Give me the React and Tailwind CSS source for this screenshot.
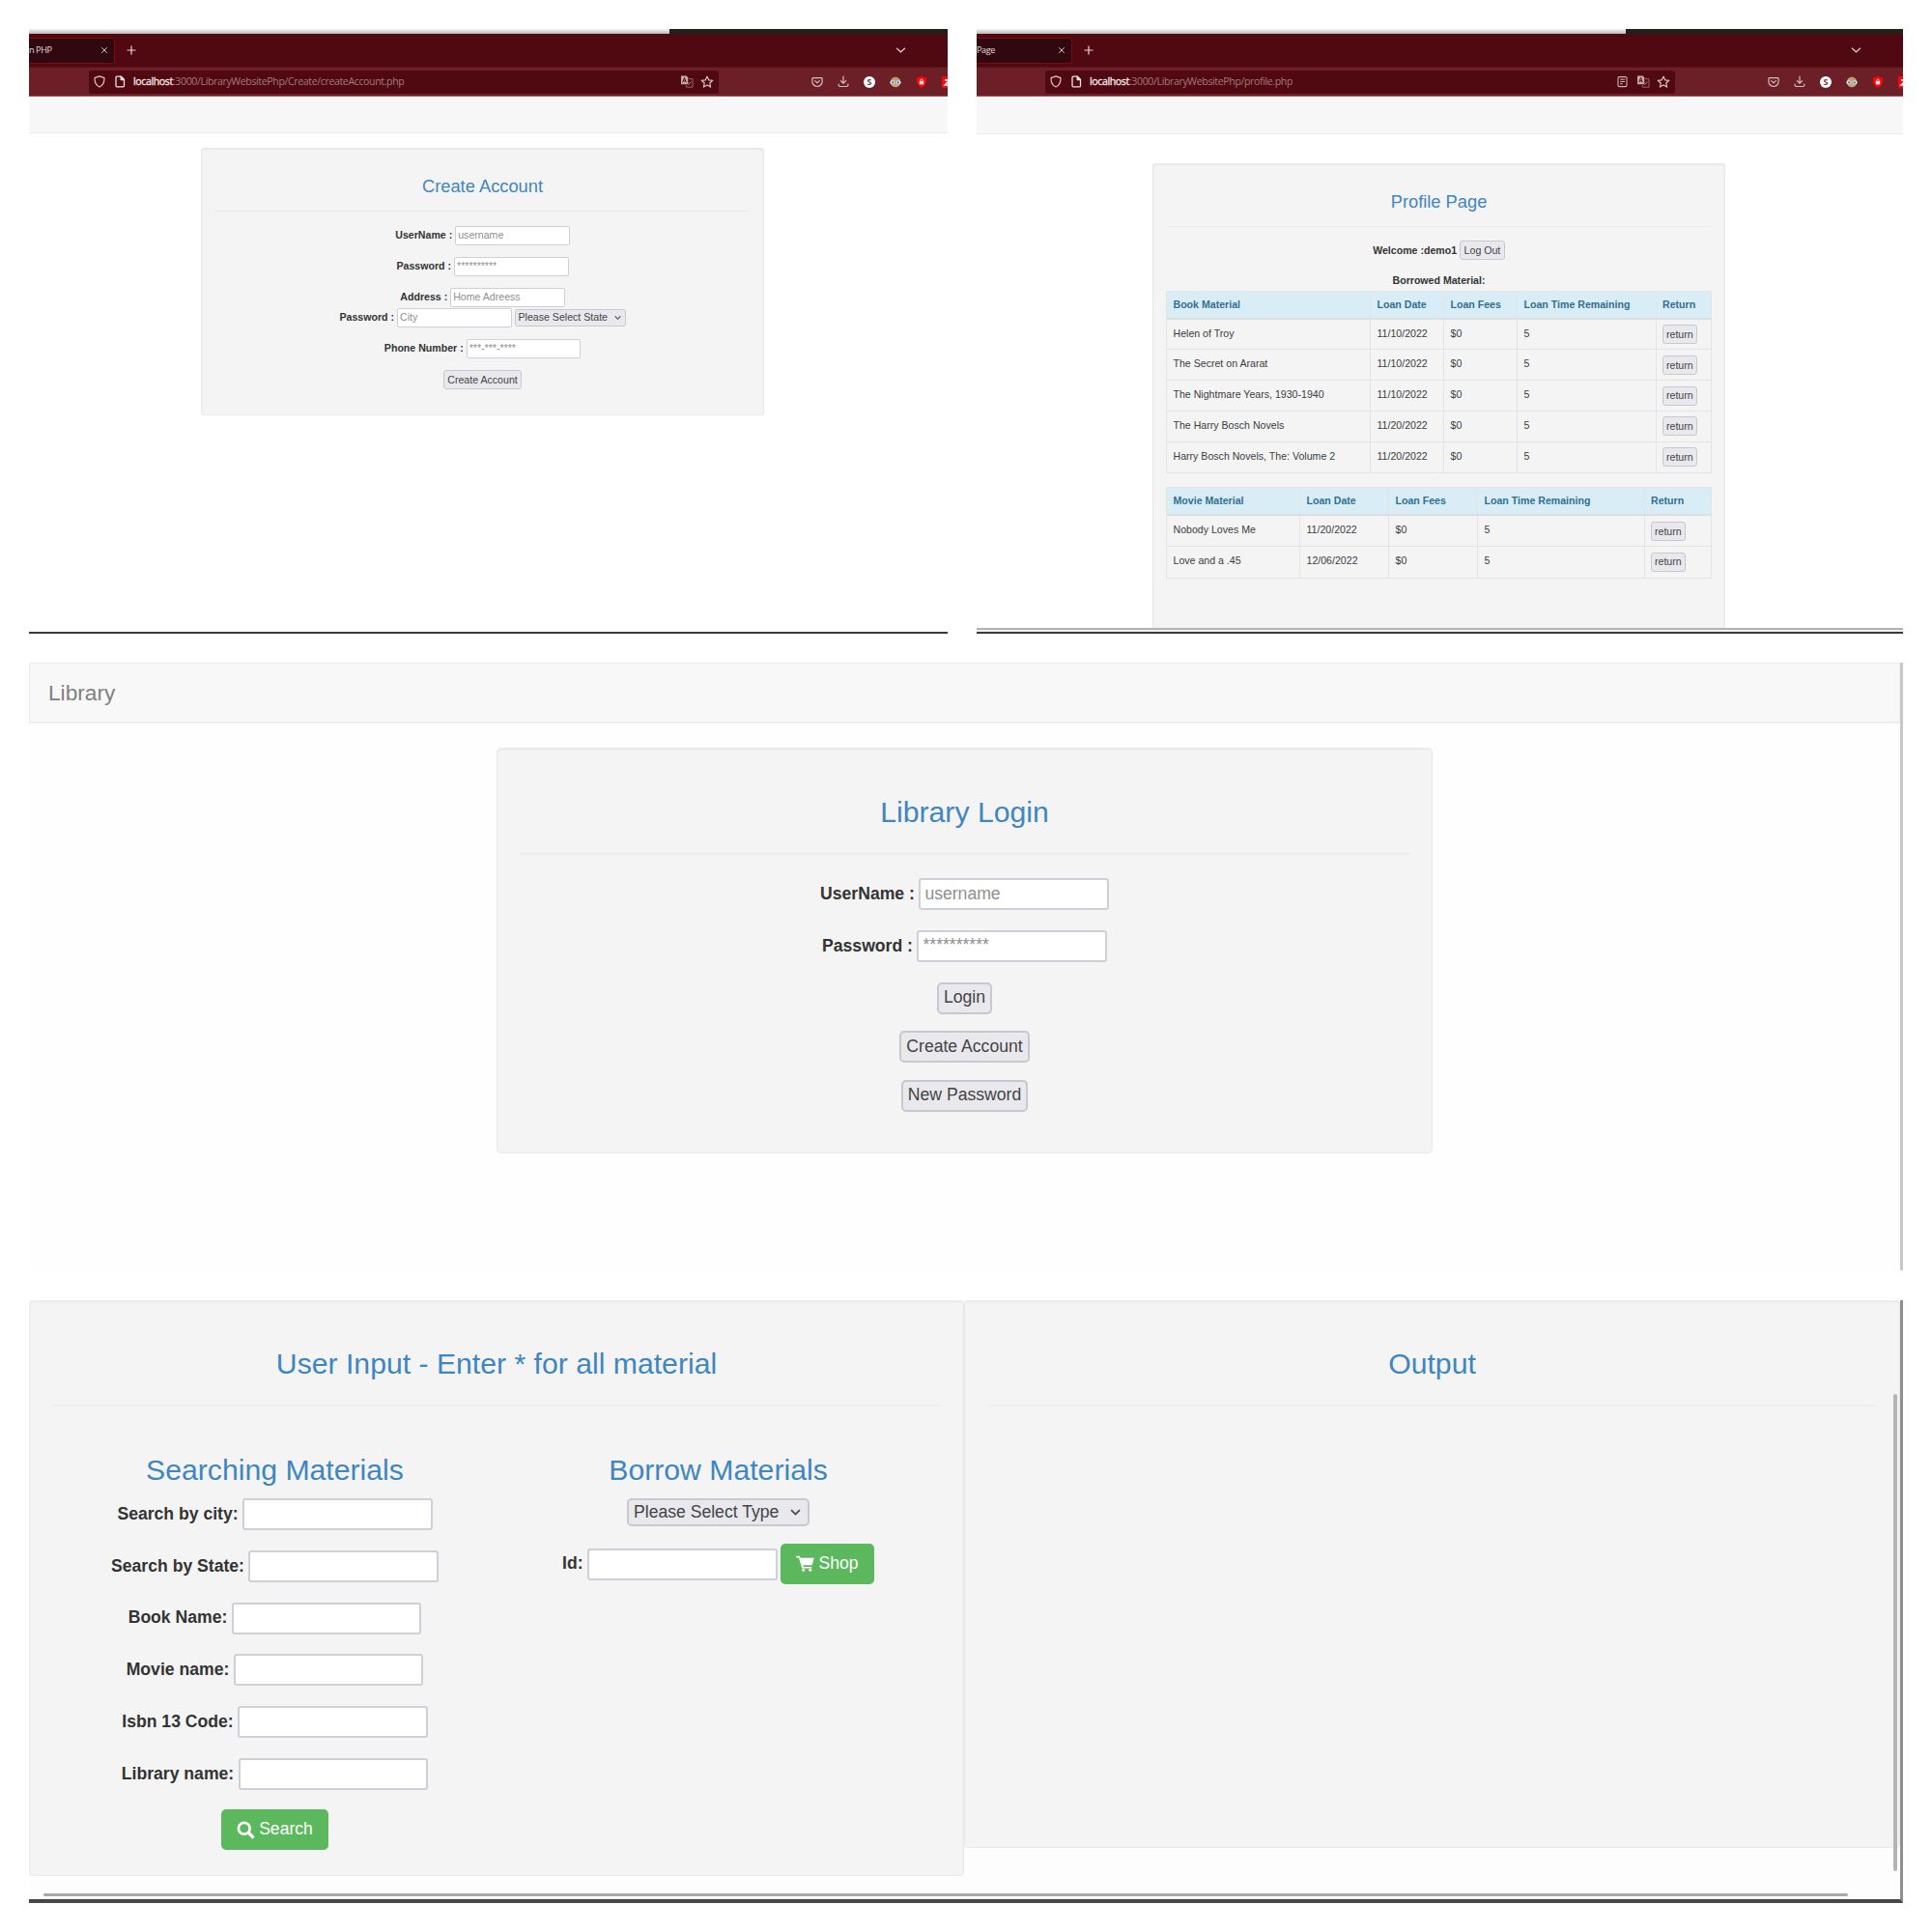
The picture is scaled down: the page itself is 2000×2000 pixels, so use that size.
import React from "react";

const chromeFont = "font-['Open_Sans','Noto_Sans',sans-serif]";

function Shield() {
  return (
    <svg className="h-[13px] w-[12px] shrink-0" viewBox="0 0 12 13" fill="none" stroke="#d9c3c5" strokeWidth="1.2" strokeLinejoin="round">
      <path d="M6 .9 10.9 2.6c.3 4.2-1.2 7.6-4.9 9.4C2.300 10.200.8 6.800 1.100 2.600Z" />
    </svg>
  );
}
function Doc() {
  return (
    <svg className="h-[13px] w-[11px] shrink-0" viewBox="0 0 11 13" fill="none" stroke="#efe3e4" strokeWidth="1.3" strokeLinejoin="round">
      <path d="M2 1.200h4.200L9.500 4.500v6.300a1 1 0 0 1-1 1H2a1 1 0 0 1-1-1V2.200a1 1 0 0 1 1-1Z" />
      <path d="M6.200 1.200v3.300h3.300Z" fill="#efe3e4" />
    </svg>
  );
}
function Reader() {
  return (
    <svg className="h-[13px] w-[11px] shrink-0" viewBox="0 0 11 13" fill="none" stroke="#cdb0b3" strokeWidth="1.1">
      <rect x="1" y="1.600" width="9" height="10" rx="1.300" />
      <path d="M3.200 4.300h4.800M3.200 6.500h4.800M3.200 8.700h2.600" />
    </svg>
  );
}
function Translate() {
  return (
    <svg className="h-[13px] w-[14px] shrink-0" viewBox="0 0 14 13" fill="none">
      <path d="M1 .6h5.600l1.600 1.700v7H1Z" fill="#c9abae" />
      <path d="M2.700 7.300 4.500 2.500 6.300 7.300M3.300 5.800h2.400" stroke="#500910" strokeWidth="1" />
      <path d="M9 3.700h4v8.500H6.400V10" stroke="#956469" strokeWidth="1" />
      <path d="M8.500 10 11.500 6.500M8.300 7.200l1.600 1.700" stroke="#a87a7e" strokeWidth="1" />
    </svg>
  );
}
function Star() {
  return (
    <svg className="h-[14px] w-[14px] shrink-0" viewBox="0 0 14 14" fill="none" stroke="#d9c3c5" strokeWidth="1.200" strokeLinejoin="round">
      <path d="m7 1.200 1.700 3.600 4.100.5-3 2.700.8 4.100L7 10.100l-3.600 2 .8-4.100-3-2.700 4.100-.5Z" />
    </svg>
  );
}
function Pocket() {
  return (
    <svg className="h-[12px] w-[12px]" viewBox="0 0 12 12" fill="none" stroke="#d3bcbe" strokeWidth="1.200" strokeLinecap="round" strokeLinejoin="round">
      <path d="M1.600 1.600h8.800c.4 0 .7.300.7.700v3.100a5.100 5.100 0 0 1-10.200 0V2.300c0-.4.300-.7.700-.7Z" />
      <path d="m3.600 4.600 2.400 2.200 2.400-2.200" />
    </svg>
  );
}
function Download() {
  return (
    <svg className="h-[13px] w-[12px]" viewBox="0 0 12 13" fill="none" stroke="#d3bcbe" strokeWidth="1.200" strokeLinecap="round" strokeLinejoin="round">
      <path d="M6 1v7M3.300 5.600 6 8.200l2.700-2.600M1.100 9.200v.9c0 .9.500 1.400 1.400 1.400h7c.9 0 1.400-.5 1.400-1.400v-.9" />
    </svg>
  );
}
function Face() {
  return (
    <svg className="h-[12px] w-[12px]" viewBox="0 0 12 12">
      <circle cx="6" cy="6" r="5.200" fill="#c9a37c" />
      <path d="M1.600 3.300a5.200 5.200 0 0 1 8.800 0Z" fill="#b59a6d" />
      <rect x=".4" y="4.600" width="4.800" height="3.600" rx="1.700" fill="#dfe9ec" />
      <rect x="6.800" y="4.600" width="4.800" height="3.600" rx="1.700" fill="#dfe9ec" />
      <circle cx="3.200" cy="6.400" r="1.200" fill="#2f8ea0" />
      <circle cx="8.800" cy="6.400" r="1.200" fill="#2f8ea0" />
    </svg>
  );
}
function Blocker() {
  return (
    <svg className="h-[12px] w-[12px]" viewBox="0 0 12 12">
      <path d="M6 0 11.200 1.800C11.400 6.500 10 10 6 12 2 10 .6 6.500.8 1.800Z" fill="#f80808" />
      <rect x="3.800" y="5" width="4.400" height="3.400" fill="#f6dfe0" />
      <path d="M4.800 5V4.300a1.200 1.200 0 0 1 2.400 0V5" fill="none" stroke="#f6dfe0" strokeWidth=".9" />
    </svg>
  );
}

function BrowserChrome({ tab, url, lead, reader, strip }) {
  return (
    <div className={`${chromeFont} shrink-0`}>
      <div className="flex h-[5px]">
        <div className="flex-1 bg-gradient-to-b from-[#f4f4f4] to-[#b9b9b9]" />
        <div className={`${strip} bg-[#20211b]`} />
      </div>
      <div className="flex h-[34px] items-center bg-[#500910]">
        <div className={`${lead ? "w-[99px]" : "w-[89px]"} flex h-[27px] items-center justify-between rounded-r-[3px] border border-l-0 border-[#7b0a16] bg-[#2f090f] pr-[6px]`}>
          <span className="whitespace-nowrap text-[9.200px] leading-none tracking-[-0.45px] text-[#e3d8d9]">{tab}</span>
          <svg className="h-[8px] w-[8px]" viewBox="0 0 8 8" stroke="#cdbdbf" strokeWidth="1"><path d="M1.200 1.200l5.600 5.600M6.800 1.200 1.200 6.800" /></svg>
        </div>
        <svg className="ml-[12px] h-[10px] w-[10px]" viewBox="0 0 10 10" stroke="#e5d8d9" strokeWidth="1.200"><path d="M5 .5v9M.5 5h9" /></svg>
        <svg className="mr-[43px] ml-auto h-[8px] w-[11px]" viewBox="0 0 11 8" fill="none" stroke="#d9c3c5" strokeWidth="1.300"><path d="M1 1.800l4.500 4 4.500-4" /></svg>
      </div>
      <div className={`${lead ? "pl-[71px]" : "pl-[62px]"} relative flex h-[31px] items-center overflow-hidden border-t border-b border-t-[#5d1219] border-b-[#93565d] bg-[#6c1f27]`}>
        <div className="flex h-[24px] w-[652px] shrink-0 items-center rounded-[3px] bg-[#500910] pr-[5px] pl-[5px]">
          <Shield />
          <span className="ml-[10px] flex"><Doc /></span>
          <span className="ml-[8px] text-[10.6px] leading-none tracking-[-0.385px] whitespace-nowrap text-[#a3797d]">
            <span className="text-[#f3e8e9] [-webkit-text-stroke:0.3px_#f3e8e9]">localhost</span>{url}
          </span>
          <span className="ml-auto flex items-center">
            {reader && <span className="mr-[9px] flex"><Reader /></span>}
            <Translate />
            <span className="ml-[7px] flex"><Star /></span>
          </span>
        </div>
        <div className="ml-[95.500px] flex shrink-0 items-center gap-[15.2px]">
          <Pocket />
          <Download />
          <span className="flex h-[12px] w-[12px] items-center justify-center rounded-full bg-white text-[9px] leading-none font-bold text-[#6c3a40]">S</span>
          <Face />
          <Blocker />
          <svg className="h-[12px] w-[12px]" viewBox="0 0 12 12"><rect width="12" height="12" rx="1" fill="#f80808" /><path d="M3 4h5L3 9h6" fill="none" stroke="#fff" strokeWidth="1.400" /></svg>
        </div>
      </div>
    </div>
  );
}

const field = {
  sm: "h-[20px] w-[118.500px] rounded-[2px] border-[1.5px] px-[2px] text-[10.6px]",
  lg: "h-[33px] w-[196.500px] rounded-[3px] border-2 px-[4px] text-[17.6px]",
};
const fieldLine = { sm: "leading-[17px]", lg: "leading-[29px]" };
const maskLine = { sm: "leading-[16px]", lg: "leading-[26px]" };
function Field({ size = "sm", value = "" }) {
  const line = value.startsWith("*") ? maskLine[size] : fieldLine[size];
  return (
    <div className={`${field[size]} ${line} shrink-0 overflow-hidden border-[#cfcfd8] bg-white whitespace-nowrap text-[#8f8f8f]`}>{value}</div>
  );
}

const labelSize = {
  sm: "gap-[3px] text-[10.6px]",
  lg: "gap-[4.500px] text-[17.6px]",
};
function Row({ size = "sm", label, className, value, children }) {
  return (
    <div className={`${labelSize[size]} ${className} flex items-center justify-center leading-none whitespace-nowrap`}>
      {label && <b className="font-bold text-[#333]">{label}</b>}
      {value !== undefined && <Field size={size} value={value} />}
      {children}
    </div>
  );
}

const buttonSize = {
  sm: "h-[20px] rounded-[3px] border-[1.5px] px-[3.500px] text-[10.6px]",
  lg: "h-[33px] rounded-[5px] border-2 px-[5px] text-[17.6px]",
};
function Button({ size = "sm", children }) {
  return (
    <button className={`${buttonSize[size]} flex items-center border-[#c8c8d2] bg-[#e8e8ed] leading-none whitespace-nowrap text-[#444]`}>{children}</button>
  );
}
function Chevron({ className }) {
  return (
    <svg className={className} viewBox="0 0 10 8" fill="none" stroke="#444" strokeWidth="1.500"><path d="M1 1.800l4 4 4-4" /></svg>
  );
}
function GreenButton({ className, children }) {
  return (
    <button className={`${className} flex h-[42px] items-center justify-center gap-[4px] rounded-[5px] bg-[#5cb85c] text-[17.6px] leading-none text-white`}>{children}</button>
  );
}

function Table({ cols, head, rows }) {
  const cell = "border-r border-[#e4e4e4] last:border-r-0 pl-[6.500px] whitespace-nowrap";
  return (
    <div className="w-[565px] border border-[#e4e4e4] text-[10.6px]">
      <div className={`${cols} grid h-[29px] border-b-2 border-[#dcdfe0] bg-[#d9edf7] font-bold text-[#31708f]`}>
        {head.map((h) => <div key={h} className={`${cell} leading-[27px]`}>{h}</div>)}
      </div>
      {rows.map((r) => (
        <div key={r[0]} className={`${cols} grid h-[31.750px] border-b border-[#e4e4e4] text-[#3c3c3c] last:border-b-0`}>
          {r.map((t, i) => <div key={i} className={`${cell} leading-[28px]`}>{t}</div>)}
          <div className="pt-[5.500px] pl-[6px]"><Button>return</Button></div>
        </div>
      ))}
    </div>
  );
}

const books = [
  ["Helen of Troy", "11/10/2022", "$0", "5"],
  ["The Secret on Ararat", "11/10/2022", "$0", "5"],
  ["The Nightmare Years, 1930-1940", "11/10/2022", "$0", "5"],
  ["The Harry Bosch Novels", "11/20/2022", "$0", "5"],
  ["Harry Bosch Novels, The: Volume 2", "11/20/2022", "$0", "5"],
];
const movies = [
  ["Nobody Loves Me", "11/20/2022", "$0", "5"],
  ["Love and a .45", "12/06/2022", "$0", "5"],
];
const loanHead = ["Loan Date", "Loan Fees", "Loan Time Remaining", "Return"];
const searchFields = ["Search by city:", "Search by State:", "Book Name:", "Movie name:", "Isbn 13 Code:", "Library name:"];

const well = "border border-[#e9e9e9] bg-[#f4f4f4] shadow-[inset_0_1px_2px_rgba(0,0,0,0.05)]";
const smTitle = "text-center text-[18.3px] leading-[24px] text-[#3f86c1]";
const lgTitle = "text-center text-[30.2px] leading-[36px] text-[#3f86c1]";

function CreateAccount() {
  return (
    <section className="flex h-[626px] w-[951px] flex-col overflow-hidden border-b-2 border-[#3a3a3a] bg-white">
      <BrowserChrome tab="n PHP" url=":3000/LibraryWebsitePhp/Create/createAccount.php" strip="w-[288px]" />
      <div className="h-[38px] shrink-0 border-b border-[#ebebeb] bg-[#f7f7f7]" />
      <div className={`${well} mt-[15px] ml-[178px] h-[277px] w-[583px] rounded-[3px]`}>
        <h2 className={`${smTitle} mt-[27px]`}>Create Account</h2>
        <div className="mx-[13px] mt-[13px] h-px bg-[#ebebeb]" />
        <Row className="mt-[14.500px]" label="UserName :" value="username" />
        <Row className="mt-[12px]" label="Password :" value="**********" />
        <Row className="mt-[12px]" label="Address :" value="Home Adreess" />
        <Row className="mt-[1px]" label="Password :" value="City">
          <button className="flex h-[18px] w-[115px] items-center justify-between rounded-[3px] border-[1.5px] border-[#c8c8d2] bg-[#e8e8ed] pr-[4px] pl-[3px] text-[10.6px] leading-none text-[#444]">
            Please Select State
            <Chevron className="h-[6px] w-[7px]" />
          </button>
        </Row>
        <Row className="mt-[12px]" label="Phone Number :" value="***-***-****" />
        <Row className="mt-[12.500px]"><Button>Create Account</Button></Row>
      </div>
    </section>
  );
}

function Profile() {
  return (
    <section className="flex h-[626px] w-[959px] flex-col overflow-hidden bg-white">
      <BrowserChrome lead reader tab="Page" url=":3000/LibraryWebsitePhp/profile.php" strip="w-[287px]" />
      <div className="h-[39px] shrink-0 border-b border-[#ebebeb] bg-[#f7f7f7]" />
      <div className={`${well} mt-[30px] ml-[182px] h-[481px] w-[593px] shrink-0 rounded-t-[3px] border-b-0`}>
        <h2 className={`${smTitle} mt-[27px]`}>Profile Page</h2>
        <div className="mx-[13px] mt-[13px] h-px bg-[#ebebeb]" />
        <Row className="mt-[14px]" label="Welcome :demo1"><Button>Log Out</Button></Row>
        <Row className="mt-[16px] mb-[5px]" label="Borrowed Material:" />
        <div className="ml-[13px]">
          <Table cols="grid-cols-[211px_76px_76px_143.5px_1fr]" head={["Book Material", ...loanHead]} rows={books} />
          <div className="h-[14px]" />
          <Table cols="grid-cols-[138px_92px_92px_172.5px_1fr]" head={["Movie Material", ...loanHead]} rows={movies} />
        </div>
      </div>
      <div className="h-[2px] shrink-0 bg-[#b2b2b2]" />
      <div className="h-[2px] shrink-0 bg-[#f0f0f0]" />
      <div className="h-[2px] shrink-0 bg-[#3a3a3a]" />
    </section>
  );
}

function Login() {
  return (
    <section className="h-[629px] border-r-[3px] border-[#c8c8c8] bg-[#fefefe]">
      <div className="flex h-[63px] items-center border border-b-2 border-[#ededed] bg-[#f8f8f8] pl-[19px] text-[22.7px] leading-none text-[#808080]">Library</div>
      <div className={`${well} mt-[25px] ml-[484px] h-[420px] w-[969px] rounded-[5px]`}>
        <h2 className={`${lgTitle} mt-[48px]`}>Library Login</h2>
        <div className="mx-[22px] mt-[24px] h-[2px] bg-[#ededed]" />
        <Row size="lg" className="mt-[24px]" label="UserName :" value="username" />
        <Row size="lg" className="mt-[21px]" label="Password :" value="**********" />
        <Row className="mt-[20.500px]"><Button size="lg">Login</Button></Row>
        <Row className="mt-[17.500px]"><Button size="lg">Create Account</Button></Row>
        <Row className="mt-[17.500px]"><Button size="lg">New Password</Button></Row>
      </div>
    </section>
  );
}

function Materials() {
  return (
    <section className="relative mt-px h-[624px] border-r-[3px] border-b-4 border-r-[#8f8f8f] border-b-[#4a4846] bg-[#fdfdfd]">
      <div className="flex items-start">
        <div className={`${well} h-[596px] w-[968px] rounded-[4px]`}>
          <h2 className={`${lgTitle} mt-[47px]`}>User Input - Enter * for all material</h2>
          <div className="mr-[22px] ml-[23px] mt-[24px] h-[2px] bg-[#eeeeee]" />
          <div className="flex">
            <div className="ml-[24px] w-[459px]">
              <h2 className={`${lgTitle} mt-[48px] mb-[11px]`}>Searching Materials</h2>
              {searchFields.map((f) => (
                <Row key={f} size="lg" className="mb-[20.8px]" label={f} value="" />
              ))}
              <GreenButton className="mx-auto -mt-[0.500px] w-[111px]">
                <svg className="h-[19px] w-[19px]" viewBox="0 0 19 19" fill="none" stroke="#fff"><circle cx="7.800" cy="7.800" r="5.900" strokeWidth="2.700" /><path d="m12.200 12.200 5.300 5.300" strokeWidth="3.200" /></svg>
                Search
              </GreenButton>
            </div>
            <div className="w-[459px]">
              <h2 className={`${lgTitle} mt-[48px] mb-[11px]`}>Borrow Materials</h2>
              <button className="mx-auto flex h-[29px] w-[189px] items-center justify-between rounded-[5px] border-2 border-[#c8c8d2] bg-[#e8e8ed] pr-[7px] pl-[5px] text-[17.6px] leading-none whitespace-nowrap text-[#444]">
                Please Select Type
                <Chevron className="h-[9px] w-[11px]" />
              </button>
              <Row size="lg" className="mt-[18px]" label="Id:" value="">
                <GreenButton className="-ml-px w-[97px]">
                  <svg className="h-[18px] w-[19px]" viewBox="0 0 19 18" fill="#fff">
                    <path d="M.3.800h3.500l.9 2h14L16.700 10.300H7.300l.4 1.600h8.600v1.600H6.300L2.900 2.500H.3Z" />
                    <circle cx="7.700" cy="15.300" r="1.500" />
                    <circle cx="14.800" cy="15.300" r="1.500" />
                  </svg>
                  Shop
                </GreenButton>
              </Row>
            </div>
          </div>
        </div>
        <div className={`${well} h-[567px] flex-1 rounded-[4px]`}>
          <h2 className={`${lgTitle} mt-[47px]`}>Output</h2>
          <div className="mr-[23px] ml-[22px] mt-[24px] h-[2px] bg-[#eeeeee]" />
        </div>
      </div>
      <div className="absolute top-[97px] right-[3px] h-[494px] w-[4px] rounded-full bg-[#b4b4b4]" />
      <div className="absolute bottom-[3px] left-[15px] h-[3px] w-[1868px] rounded-full bg-[#a9a9a9]" />
    </section>
  );
}

export default function App() {
  return (
    <main className="flex h-[2000px] w-[2000px] flex-col gap-[30px] overflow-hidden bg-white p-[30px] font-['Liberation_Sans',Arial,sans-serif]">
      <div className="flex gap-[30px]">
        <CreateAccount />
        <Profile />
      </div>
      <Login />
      <Materials />
    </main>
  );
}
